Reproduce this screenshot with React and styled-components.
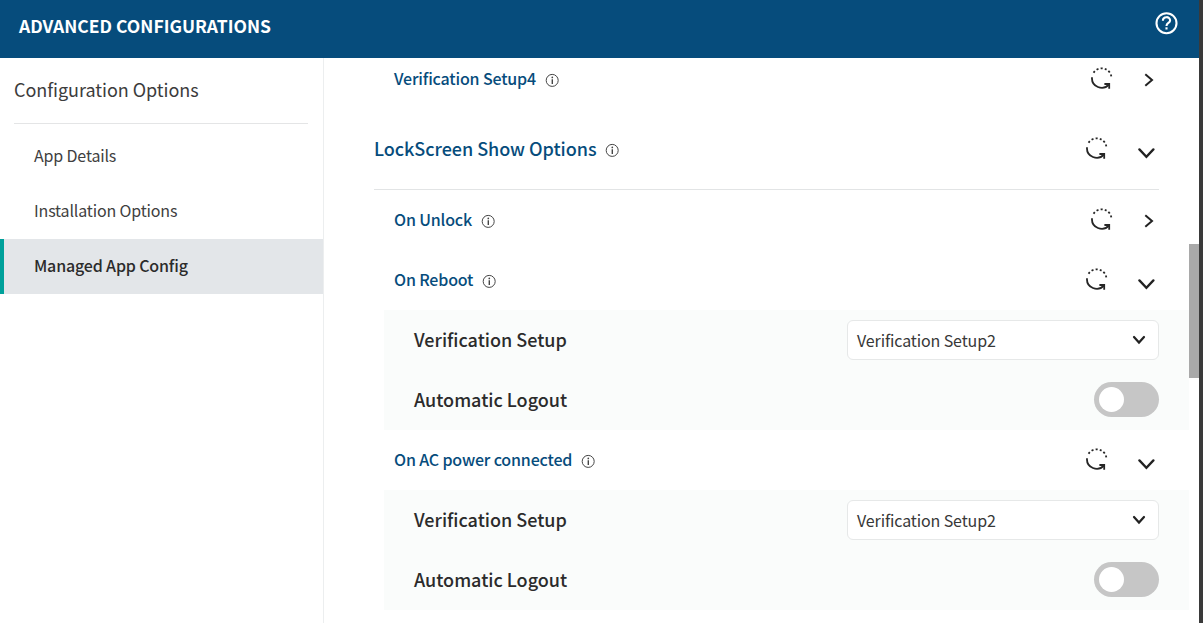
import React from "react";
import styled, { createGlobalStyle } from "styled-components";

const GlobalStyle = createGlobalStyle`
  *, *::before, *::after { box-sizing: border-box; }
  body {
    margin: 0;
    overflow: hidden;
    background: #3a3a3a;
    color: #2b2b2b;
    font-family: "Noto Sans CJK SC", "Noto Sans", sans-serif;
  }
`;

const Dialog = styled.div`
  display: flex;
  flex-direction: column;
  width: 1199px;
  height: 623px;
  background: #fff;
`;

const Header = styled.header`
  display: flex;
  align-items: flex-start;
  justify-content: space-between;
  flex: none;
  height: 58px;
  padding: 11px 21px 0 19px;
  background: #064c7c;
  color: #fff;
`;

const Title = styled.h1`
  margin: 3px 0 0;
  font-size: 17.5px;
  font-weight: 700;
  line-height: 24px;
  white-space: nowrap;
`;

const Body = styled.div`
  display: flex;
  flex: 1;
  min-height: 0;
`;

const Sidebar = styled.aside`
  flex: none;
  width: 324px;
  border-right: 1px solid #eceeef;
`;

const SidebarTitle = styled.h2`
  margin: 0 15px 5px 14px;
  height: 66px;
  border-bottom: 1px solid #e4e5e6;
  font-size: 18px;
  font-weight: 400;
  letter-spacing: -0.04px;
  line-height: 62px;
  color: #3c3c3c;
`;

const NavItem = styled.div`
  height: 55px;
  padding-left: 30px;
  border-left: 4px solid ${(p) => (p.$active ? "#00a19b" : "transparent")};
  background: ${(p) => (p.$active ? "#e3e6e9" : "transparent")};
  color: ${(p) => (p.$active ? "#2b2b2b" : "#404040")};
  font-size: 16px;
  font-weight: ${(p) => (p.$active ? 500 : 400)};
  letter-spacing: -0.16px;
  line-height: 52px;
`;

const Content = styled.main`
  flex: 1;
  min-width: 0;
  overflow: hidden;
  padding-left: 50px;
`;

const Rows = styled.div`
  margin-top: -9px;
`;

const Row = styled.div`
  display: flex;
  align-items: center;
  height: 60px;
  margin-right: 30px;
  padding-left: 20px;
`;

const SectionRow = styled(Row)`
  height: 81px;
  padding-left: 0;
  padding-bottom: 1px;
  border-bottom: 1px solid #e2e4e5;
`;

const RowTitle = styled.span`
  color: #064c7c;
  font-size: ${(p) => (p.$large ? 18 : 16)}px;
  font-weight: 500;
  letter-spacing: ${(p) => (p.$large ? -0.04 : -0.16)}px;
  line-height: 24px;
  padding-bottom: 2px;
  white-space: nowrap;
`;

const Info = styled.svg`
  width: 14px;
  height: 14px;
  margin: 2px 0 0 9px;
`;

const Actions = styled.div`
  display: flex;
  align-items: center;
  margin-left: auto;
  gap: ${(p) => (p.$open ? 28 : 30)}px;
  padding-right: ${(p) => (p.$open ? 4 : 5)}px;
`;

const ResetSvg = styled.svg`
  width: 24px;
  height: 24px;
  margin-bottom: 2px;
`;

const ChevronSvg = styled.svg`
  width: ${(p) => p.$w}px;
  height: ${(p) => p.$h}px;
  margin-top: ${(p) => p.$drop || 0}px;
`;

const Panel = styled.section`
  margin-left: 10px;
  padding: 0 30px;
  background: #fafcfb;
`;

const Field = styled.div`
  display: flex;
  align-items: center;
  justify-content: space-between;
  height: 60px;
`;

const Label = styled.span`
  padding-bottom: 2px;
  font-size: 18px;
  font-weight: 500;
  line-height: 26px;
  white-space: nowrap;
`;

const Select = styled.div`
  display: flex;
  align-items: center;
  justify-content: space-between;
  width: 312px;
  height: 40px;
  padding: 0 12px 0 9px;
  border: 1px solid #e6e8e8;
  border-radius: 6px;
  background: #fff;
  color: #383838;
  font-size: 16px;
  letter-spacing: -0.12px;
  line-height: 24px;
`;

const Toggle = styled.div`
  width: 65px;
  height: 35px;
  margin-bottom: 1px;
  padding: 5px;
  border-radius: 18px;
  background: #c6c6c6;
`;

const Knob = styled.div`
  width: 25px;
  height: 25px;
  border-radius: 50%;
  background: #fff;
`;

const ScrollTrack = styled.div`
  flex: none;
  width: 10px;
  padding-top: 186px;
`;

const ScrollThumb = styled.div`
  height: 134px;
  background: #a9a9a9;
`;

function InfoIcon() {
  return (
    <Info viewBox="0 0 14 14" fill="none" stroke="#454545">
      <circle cx="7.2" cy="7.4" r="6" strokeWidth="1" />
      <path d="M7.3 6.3V10.9" strokeWidth="1.4" />
      <circle cx="7.3" cy="4.4" r=".85" fill="#454545" stroke="none" />
    </Info>
  );
}

function ResetIcon() {
  return (
    <ResetSvg viewBox="0 0 24 24" fill="none" stroke="#262626" strokeWidth="1.8">
      <path d="M2 11.3A9.7 9.7 0 0 0 19 18.4" />
      <path d="M14.4 18H19.2V22.8" />
      <path d="M3.6 6.7A9.7 9.7 0 0 1 21.4 12.6" strokeDasharray="2 2.2" />
    </ResetSvg>
  );
}

function Chevron({ direction, small }) {
  if (direction === "right") {
    return (
      <ChevronSvg $w={10} $h={14} $drop={1} viewBox="0 0 10 14" fill="none" stroke="#222" strokeWidth="2">
        <path d="M1.3 1.3 8 7 1.3 12.7" />
      </ChevronSvg>
    );
  }
  return (
    <ChevronSvg $w={small ? 14 : 18} $h={small ? 10 : 12} $drop={small ? 0 : 8} viewBox={small ? "0 0 14 10" : "0 0 18 12"} fill="none" stroke="#222" strokeWidth={small ? 2.2 : 2.3} strokeLinecap="round">
      <path d={small ? "M2 2 7 7.6 12 2" : "M2.4 2.4 9.4 9.8 16.4 2.4"} />
    </ChevronSvg>
  );
}

function HelpIcon() {
  return (
    <svg width="24" height="24" viewBox="0 0 24 24" fill="none" stroke="#fff" strokeWidth="2.1">
      <circle cx="12.5" cy="12.2" r="10" />
      <path d="M8.9 9.7C8.9 5 16.1 5.1 16.1 9.4C16.1 11.9 12.5 12 12.5 14.9" />
      <path d="M12.5 16.3V18.5" />
    </svg>
  );
}

function RowContent({ title, open, large }) {
  return (
    <>
      <RowTitle $large={large}>{title}</RowTitle>
      <InfoIcon />
      <Actions $open={open}>
        <ResetIcon />
        <Chevron direction={open ? "down" : "right"} />
      </Actions>
    </>
  );
}

function VerificationPanel() {
  return (
    <Panel>
      <Field>
        <Label>Verification Setup</Label>
        <Select>
          Verification Setup2
          <Chevron small />
        </Select>
      </Field>
      <Field>
        <Label>Automatic Logout</Label>
        <Toggle role="switch" aria-checked="false">
          <Knob />
        </Toggle>
      </Field>
    </Panel>
  );
}

export default function App() {
  return (
    <>
      <GlobalStyle />
      <Dialog>
        <Header>
          <Title>ADVANCED CONFIGURATIONS</Title>
          <HelpIcon />
        </Header>
        <Body>
          <Sidebar>
            <SidebarTitle>Configuration Options</SidebarTitle>
            <NavItem>App Details</NavItem>
            <NavItem>Installation Options</NavItem>
            <NavItem $active>Managed App Config</NavItem>
          </Sidebar>
          <Content>
            <Rows>
              <Row><RowContent title="Verification Setup4" /></Row>
              <SectionRow><RowContent title="LockScreen Show Options" open large /></SectionRow>
              <Row><RowContent title="On Unlock" /></Row>
              <Row><RowContent title="On Reboot" open /></Row>
              <VerificationPanel />
              <Row><RowContent title="On AC power connected" open /></Row>
              <VerificationPanel />
            </Rows>
          </Content>
          <ScrollTrack>
            <ScrollThumb />
          </ScrollTrack>
        </Body>
      </Dialog>
    </>
  );
}
